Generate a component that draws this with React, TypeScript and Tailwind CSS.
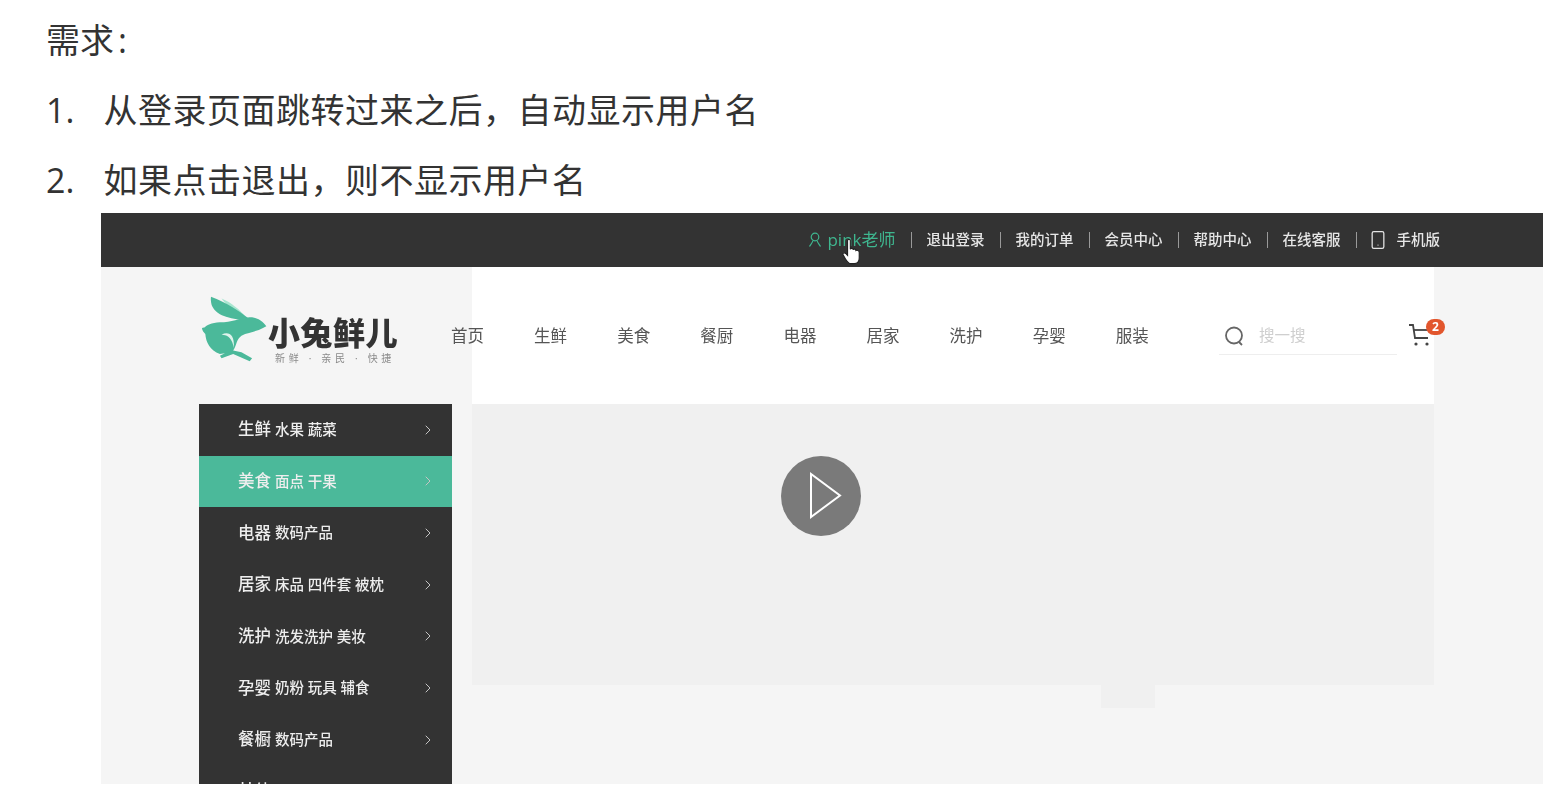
import React from 'react';
import { ChevronRight, Smartphone } from 'lucide-react';

const cjk = "font-['Open_Sans','Noto_Sans_CJK_SC',sans-serif]";

const topLinks = ['退出登录', '我的订单', '会员中心', '帮助中心', '在线客服'];
const navItems = ['首页', '生鲜', '美食', '餐厨', '电器', '居家', '洗护', '孕婴', '服装'];
const sideItems = [
  { main: '生鲜', sub: '水果 蔬菜' },
  { main: '美食', sub: '面点 干果', active: true },
  { main: '电器', sub: '数码产品' },
  { main: '居家', sub: '床品 四件套 被枕' },
  { main: '洗护', sub: '洗发洗护 美妆' },
  { main: '孕婴', sub: '奶粉 玩具 辅食' },
  { main: '餐橱', sub: '数码产品' },
  { main: '其他', sub: '' },
];

const Divider = () => <span className="h-[16px] w-px bg-[#9a9a9a]" />;

const Logo = () => (
  <div className="flex h-[137px] items-start">
    <svg width="68" height="70" viewBox="300 250 205 210" className="mt-[27px] ml-[1px] shrink-0">
      <path d="M365 263C385 290 410 305 438 318C420 298 395 275 365 263Z" fill="#a8e6d0" />
      <path d="M333 258C330 290 345 318 420 327L445 322C415 300 380 275 333 258Z" fill="#4bb99a" />
      <path
        d="M500 347C490 330 470 318 445 320C420 322 395 335 360 335C335 336 318 345 315 350L306 352C306 360 312 366 316 370C318 395 330 420 360 430L375 428L360 436L365 443L400 430L450 452L457 443L425 425L400 420C410 405 410 385 425 375C445 365 470 365 500 347Z"
        fill="#4bb99a"
      />
      <path d="M365 372C385 362 405 370 402 412C398 385 385 372 365 372Z" fill="#dff3ec" />
    </svg>
    <div className="mt-[44px] flex flex-col">
      <span className="text-[32px] leading-[44px] font-black tracking-[0.5px] whitespace-nowrap text-[#333]">小兔鲜儿</span>
      <span className="-mt-[4px] ml-[7px] text-[10px] leading-[14px] tracking-[3.7px] whitespace-nowrap text-[#8a8a8a]">新鲜 · 亲民 · 快捷</span>
    </div>
  </div>
);

export default function App() {
  return (
    <div className={`h-[802px] overflow-hidden bg-white text-[#333] ${cjk}`}>
      <div className="pt-[17px] pl-[46px]">
        <p className="h-[70px] text-[34px] leading-[46px]">
          需求<span className="ml-[4px]">:</span>
        </p>
        <ol className="flex flex-col">
          <li className="flex h-[70px] text-[34px] leading-[46px]">
            <span className="w-[57.500px]">1.</span>
            <span className="tracking-[0.5px]">从登录页面跳转过来之后，自动显示用户名</span>
          </li>
          <li className="flex h-[56px] text-[34px] leading-[46px]">
            <span className="w-[57.500px]">2.</span>
            <span className="tracking-[0.5px]">如果点击退出，则不显示用户名</span>
          </li>
        </ol>
      </div>

      <div className="ml-[101px] h-[571px] w-[1442px] overflow-hidden bg-[#f5f5f5] blur-[0.5px]">
        <div className="relative flex h-[54px] items-center justify-end gap-[15px] bg-[#333] pr-[103px] text-[14.500px] font-medium text-[#e6e6e6]">
          <span className="flex items-center text-[#3fb68f]">
            <svg width="14" height="16" viewBox="0 0 14 16" fill="none" stroke="currentColor" strokeWidth="1.2" className="mr-[5px]">
              <circle cx="7" cy="5" r="3.8" />
              <path d="M5 8.500C4.500 11 2.500 12.500 1.500 14.500M9 8.500C9.500 11 11.500 12.500 12.500 14.500" />
            </svg>
            <span className="text-[17px] font-normal">pink老师</span>
          </span>
          {topLinks.map((link) => (
            <React.Fragment key={link}>
              <Divider />
              <span>{link}</span>
            </React.Fragment>
          ))}
          <Divider />
          <span className="-ml-[4px] flex items-center gap-[9px]">
            <Smartphone size={20} strokeWidth={1.5} />
            手机版
          </span>
          <svg width="20" height="28" viewBox="0 0 18 25" className="absolute top-[25px] left-[741px]">
            <path
              d="M5 2C5 .8 7.500 .8 7.500 2V10C8 8.800 10 9 10 10.500C10.500 9.500 12.500 9.800 12.500 11.200C13.500 10.500 15.500 11 15.500 13V18C15.500 21 14 23 11 23H8C5.500 23 4.500 21 3 18.500L1 15C.5 13.500 2 12.500 3.500 14L5 15.500Z"
              fill="white"
              stroke="#222"
              strokeWidth="1"
            />
          </svg>
        </div>

        <div className="flex pl-[98px]">
          <div className="w-[253px] shrink-0">
            <Logo />
            <ul className="bg-[#333]">
              {sideItems.map((item) => (
                <li
                  key={item.main}
                  className={`flex h-[51.670px] items-center justify-between pr-[16px] pl-[39px] font-medium text-[#eee] ${item.active ? 'bg-[#4bb99a]' : ''}`}
                >
                  <span className="flex items-center gap-[4px] whitespace-nowrap">
                    <span className="text-[16.500px]">{item.main}</span>
                    <span className="text-[14.500px]">{item.sub}</span>
                  </span>
                  <ChevronRight size={16} strokeWidth={1.5} className="text-[#c4c4c4]" />
                </li>
              ))}
            </ul>
          </div>

          <div className="ml-[20px] w-[962px] shrink-0">
            <div className="flex h-[137px] items-start bg-white">
              <nav className="mt-[57px] -ml-[21px] flex w-[698px] gap-[50.100px] text-[16.500px] leading-[24px] text-[#555]">
                {navItems.map((item) => (
                  <span key={item} className="whitespace-nowrap">{item}</span>
                ))}
              </nav>
              <div className="mt-[47px] ml-[70px] flex h-[41px] w-[178px] items-center gap-[14px] border-b border-[#eeeeee] pt-[4px] pl-[4px] text-[15.500px] text-[#cfcfcf]">
                <svg width="22" height="22" viewBox="0 0 22 22" fill="none" stroke="#666" strokeWidth="1.800">
                  <circle cx="11" cy="10.500" r="8" />
                  <path d="M16 17L19 20" />
                </svg>
                搜一搜
              </div>
              <div className="relative mt-[56px] ml-[11px]">
                <svg width="24" height="24" viewBox="0 0 24 24" fill="none" stroke="#444" strokeWidth="1.800">
                  <path d="M1 2H5L7 15H20" />
                  <path d="M6 7H21" />
                  <circle cx="8" cy="21" r="1.600" fill="#444" stroke="none" />
                  <circle cx="19" cy="21" r="1.600" fill="#444" stroke="none" />
                </svg>
                <span className="absolute -top-[4px] left-[18px] flex h-[16px] w-[19px] items-center justify-center rounded-full bg-[#e2562d] text-[12px] leading-none font-bold text-white">2</span>
              </div>
            </div>
            <div className="flex h-[281px] justify-center bg-[#f0f0f0] pt-[52px] pr-[265px]">
              <div className="flex h-[80px] w-[80px] items-center justify-center rounded-full bg-[#7a7a7a]">
                <svg width="34" height="48" viewBox="0 0 34 48" fill="none" stroke="white" strokeWidth="2" className="ml-[10px]">
                  <path d="M2 2V45L31 23.500Z" />
                </svg>
              </div>
            </div>
            <div className="ml-[629px] h-[23px] w-[54px] bg-[#f0f0f0]" />
          </div>
        </div>
      </div>
    </div>
  );
}
